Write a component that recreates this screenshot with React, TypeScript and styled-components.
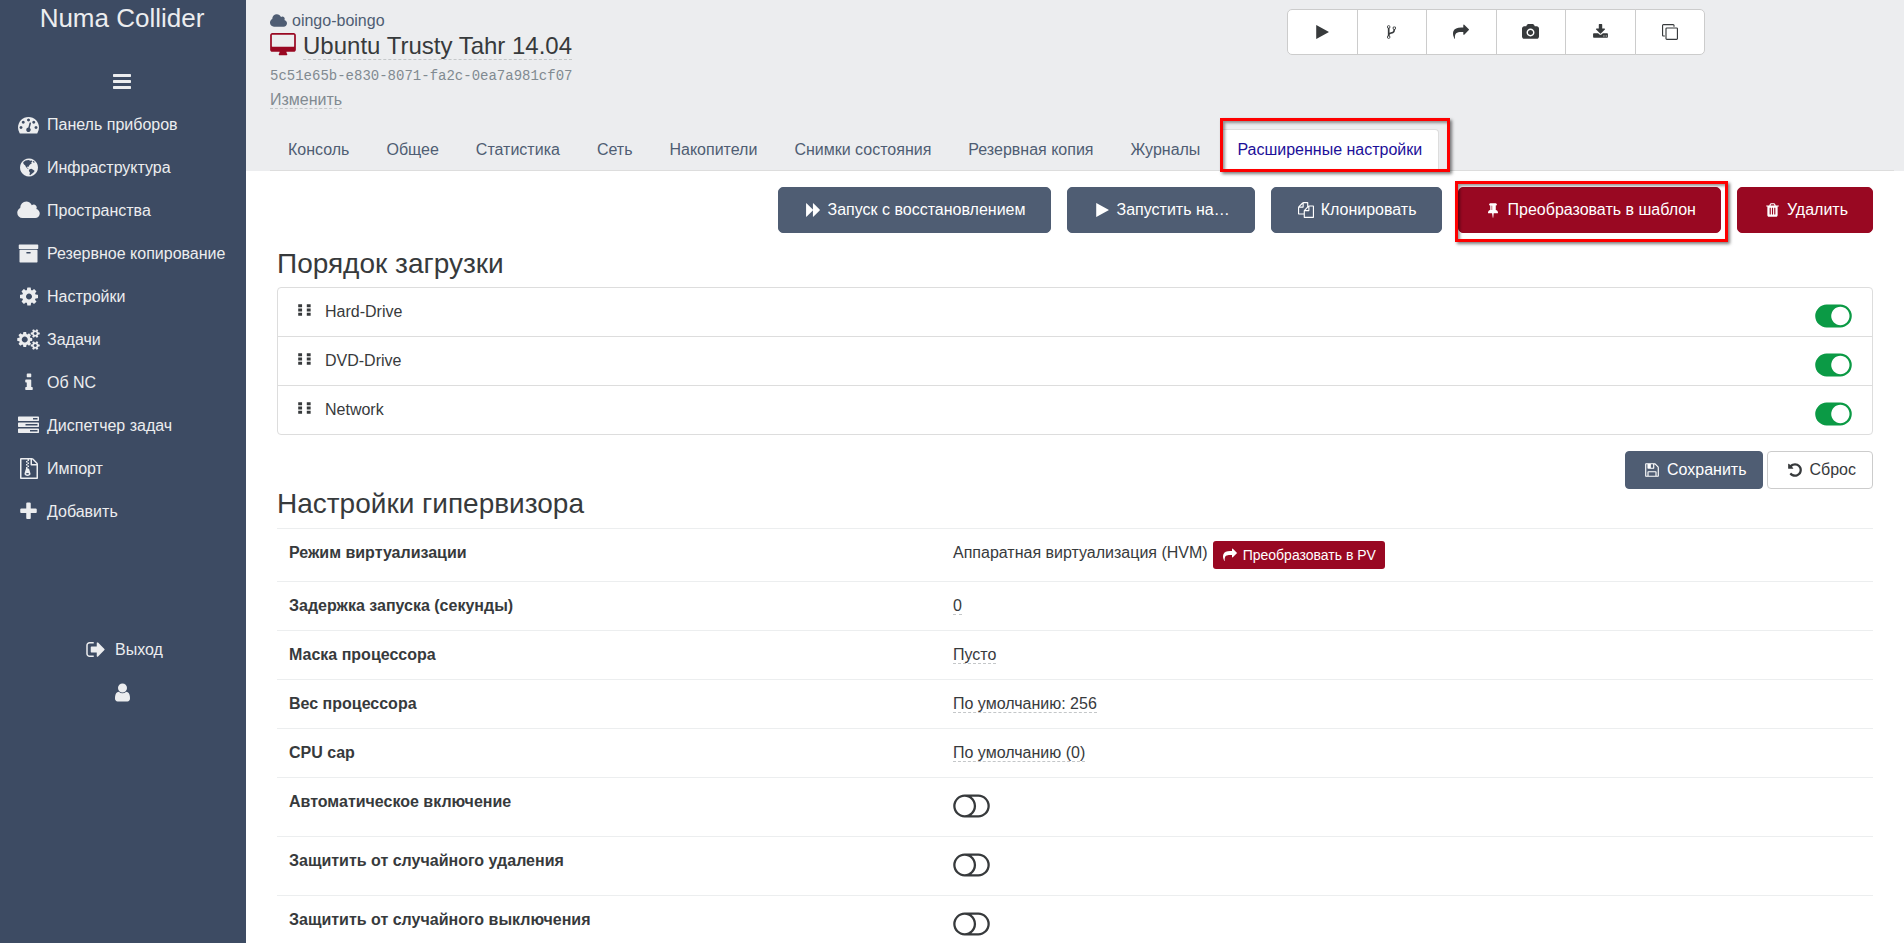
import React from "react";
import styled, { createGlobalStyle, css } from "styled-components";

const Global = createGlobalStyle`
  *, *::before, *::after { box-sizing: border-box; }
  body {
    margin: 0;
    font: 16px/24px "Liberation Sans", Arial, sans-serif;
    color: #373a3c;
    background: #fff;
  }
  a { color: inherit; text-decoration: none; }
  button { font: inherit; cursor: pointer; }
  h1, h2, p, ul { margin: 0; padding: 0; font-weight: normal; }
  ul { list-style: none; }
`;

/* Glyphs share a 1792-unit em square: [left edge, advance, outline]. */
const glyphs = {
  bars: [128, 1536, "M1664 1344v128q0 26-19 45t-45 19h-1408q-26 0-45-19t-19-45v-128q0-26 19-45t45-19h1408q26 0 45 19t19 45zm0-512v128q0 26-19 45t-45 19h-1408q-26 0-45-19t-19-45v-128q0-26 19-45t45-19h1408q26 0 45 19t19 45zm0-512v128q0 26-19 45t-45 19h-1408q-26 0-45-19t-19-45v-128q0-26 19-45t45-19h1408q26 0 45 19t19 45z"],
  dashboard: [0, 1792, "M384 1152q0-53-37.5-90.5t-90.5-37.5-90.5 37.5-37.5 90.5 37.5 90.5 90.5 37.5 90.5-37.5 37.5-90.5zm192-448q0-53-37.5-90.5t-90.5-37.5-90.5 37.5-37.5 90.5 37.5 90.5 90.5 37.5 90.5-37.5 37.5-90.5zm428 481l101-382q6-26-7.5-48.5t-38.5-29.5-48 6.5-30 39.5l-101 382q-60 5-107 43.5t-63 98.5q-20 77 20 146t117 89 146-20 89-117q16-60-6-117t-72-91zm660-33q0-53-37.5-90.5t-90.5-37.5-90.5 37.5-37.5 90.5 37.5 90.5 90.5 37.5 90.5-37.5 37.5-90.5zm-640-640q0-53-37.5-90.5t-90.5-37.5-90.5 37.5-37.5 90.5 37.5 90.5 90.5 37.5 90.5-37.5 37.5-90.5zm448 192q0-53-37.5-90.5t-90.5-37.5-90.5 37.5-37.5 90.5 37.5 90.5 90.5 37.5 90.5-37.5 37.5-90.5zm320 448q0 261-141 483-19 29-54 29h-1402q-35 0-54-29-141-221-141-483 0-182 71-348t191-286 286-191 348-71 348 71 286 191 191 286 71 348z"],
  globe: [128, 1536, "M896 128q209 0 385.500 103t279.500 279.500 103 385.500-103 385.500-279.500 279.500-385.500 103-385.500-103-279.500-279.500-103-385.500 103-385.500 279.500-279.500 385.500-103zM420 420L600 300 860 250 1000 330 1130 290 1200 380 1080 440 1140 540 980 640 880 760 900 840 780 800 720 880 820 980 900 1040 780 1010 640 860 560 700 470 640 400 520zM940 1040L1100 1000 1280 1100 1380 1200 1260 1340 1120 1440 1000 1560 930 1500 980 1340 880 1180zM1240 330L1380 420 1340 500 1240 440z"],
  cloud: [64, 1920, "M1984 1152q0 159-112.5 271.5t-271.5 112.5h-1088q-185 0-316.5-131.5t-131.5-316.5q0-132 71-241.5t187-163.5q-2-28-2-43 0-212 150-362t362-150q158 0 286.5 88t187.5 230q70-62 166-62 106 0 181 75t75 181q0 75-41 138 129 30 213 134.5t84 239.5z"],
  archive: [0, 1792, "M1088 832q0-26-19-45t-45-19h-256q-26 0-45 19t-19 45 19 45 45 19h256q26 0 45-19t19-45zm576-192v960q0 26-19 45t-45 19h-1408q-26 0-45-19t-19-45v-960q0-26 19-45t45-19h1408q26 0 45 19t19 45zm64-448v256q0 26-19 45t-45 19h-1536q-26 0-45-19t-19-45v-256q0-26 19-45t45-19h1536q26 0 45 19t19 45z"],
  cog: [128, 1536, "M1152 896q0-106-75-181t-181-75-181 75-75 181 75 181 181 75 181-75 75-181zm512-109v222q0 12-8 23t-20 13l-185 28q-19 54-39 91 35 50 107 138 10 12 10 25t-9 23q-27 37-99 108t-94 71q-12 0-26-9l-138-108q-44 23-91 38-16 136-29 186-7 28-36 28h-222q-14 0-24.5-8.5t-11.5-21.5l-28-184q-49-16-90-37l-141 107q-10 9-25 9-14 0-25-11-126-114-165-168-7-10-7-23 0-12 8-23 15-21 51-66.5t54-70.5q-27-50-41-99l-183-27q-13-2-21-12.5t-8-23.5v-222q0-12 8-23t19-13l186-28q14-46 39-92-40-57-107-138-10-12-10-24 0-10 9-23 26-36 98.5-107.5t94.5-71.5q13 0 26 10l138 107q44-23 91-38 16-136 29-186 7-28 36-28h222q14 0 24.5 8.5t11.5 21.5l28 184q49 16 90 37l142-107q9-9 24-9 13 0 25 10 129 119 165 170 7 8 7 22 0 12-8 23-15 21-51 66.5t-54 70.5q26 50 41 98l183 28q13 2 21 12.5t8 23.5z"],
  cogs: [0, 1920, "M896 896q0-106-75-181t-181-75-181 75-75 181 75 181 181 75 181-75 75-181zm768 512q0-52-38-90t-90-38-90 38-38 90q0 53 37.5 90.5t90.5 37.5 90.5-37.5 37.5-90.5zm0-1024q0-52-38-90t-90-38-90 38-38 90q0 53 37.5 90.5t90.5 37.5 90.5-37.5 37.5-90.5zm-384 421v185q0 10-7 19.5t-16 10.5l-155 24q-11 35-32 76 34 48 90 115 7 11 7 20 0 12-7 19-23 30-82.5 89.5t-78.5 59.5q-11 0-21-7l-115-90q-37 19-77 31-11 108-23 155-7 24-30 24h-186q-11 0-20-7.5t-10-17.5l-23-153q-34-10-75-31l-118 89q-7 7-20 7-11 0-21-8-144-133-144-160 0-9 7-19 10-14 41-53t47-61q-23-44-35-82l-152-24q-10-1-17-9.5t-7-19.5v-185q0-10 7-19.5t16-10.5l155-24q11-35 32-76-34-48-90-115-7-11-7-20 0-12 7-20 22-30 82-89t79-59q11 0 21 7l115 90q34-18 77-32 11-108 23-154 7-24 30-24h186q11 0 20 7.5t10 17.5l23 153q34 10 75 31l118-89q8-7 20-7 11 0 21 8 144 133 144 160 0 8-7 19-12 16-42 54t-45 60q23 48 34 82l152 23q10 2 17 10.5t7 19.5zm640 533v140q0 16-149 31-12 27-30 52 51 113 51 138 0 4-4 7-122 71-124 71-8 0-46-47t-52-68q-20 2-30 2t-30-2q-14 21-52 68t-46 47q-2 0-124-71-4-3-4-7 0-25 51-138-18-25-30-52-149-15-149-31v-140q0-16 149-31 13-29 30-52-51-113-51-138 0-4 4-7 4-2 35-20t59-34 30-16q8 0 46 46.5t52 67.5q20-2 30-2t30 2q51-71 92-112l6-2q4 0 124 70 4 3 4 7 0 25-51 138 17 23 30 52 149 15 149 31zm0-1024v140q0 16-149 31-12 27-30 52 51 113 51 138 0 4-4 7-122 71-124 71-8 0-46-47t-52-68q-20 2-30 2t-30-2q-14 21-52 68t-46 47q-2 0-124-71-4-3-4-7 0-25 51-138-18-25-30-52-149-15-149-31v-140q0-16 149-31 13-29 30-52-51-113-51-138 0-4 4-7 4-2 35-20t59-34 30-16q8 0 46 46.5t52 67.5q20-2 30-2t30 2q51-71 92-112l6-2q4 0 124 70 4 3 4 7 0 25-51 138 17 23 30 52 149 15 149 31z"],
  info: [576, 640, "M1216 1344v128q0 26-19 45t-45 19h-512q-26 0-45-19t-19-45v-128q0-26 19-45t45-19h64v-384h-64q-26 0-45-19t-19-45v-128q0-26 19-45t45-19h384q26 0 45 19t19 45v576h64q26 0 45 19t19 45zm-128-1152v192q0 26-19 45t-45 19h-256q-26 0-45-19t-19-45v-192q0-26 19-45t45-19h256q26 0 45 19t19 45z"],
  tasks: [0, 1792, "M1024 1408h640v-128h-640v128zm-384-512h1024v-128h-1024v128zm640-512h384v-128h-384v128zm512 832v256q0 26-19 45t-45 19h-1664q-26 0-45-19t-19-45v-256q0-26 19-45t45-19h1664q26 0 45 19t19 45zm0-512v256q0 26-19 45t-45 19h-1664q-26 0-45-19t-19-45v-256q0-26 19-45t45-19h1664q26 0 45 19t19 45zm0-512v256q0 26-19 45t-45 19h-1664q-26 0-45-19t-19-45v-256q0-26 19-45t45-19h1664q26 0 45 19t19 45z"],
  fileArchive: [128, 1536, "M768 384v-128h-128v128h128zm128 128v-128h-128v128h128zm-128 128v-128h-128v128h128zm128 128v-128h-128v128h128zm700-388q28 28 48 76t20 88v1152q0 40-28 68t-68 28h-1344q-40 0-68-28t-28-68v-1600q0-40 28-68t68-28h896q40 0 88 20t76 48zm-444-244v376h376q-10-29-22-41l-313-313q-12-12-41-22zm384 1528v-1024h-416q-40 0-68-28t-28-68v-416h-128v128h-128v-128h-512v1536h1280zm-627-721l107 349q8 27 8 52 0 83-72.5 137.5t-183.5 54.5-183.5-54.5-72.5-137.5q0-25 8-52 21-63 120-396v-128h128v128h79q22 0 39 13t23 34zm-141 465q53 0 90.5-19t37.5-45-37.5-45-90.5-19-90.5 19-37.5 45 37.5 45 90.5 19z"],
  plus: [192, 1408, "M1600 736v192q0 40-28 68t-68 28h-416v416q0 40-28 68t-68 28h-192q-40 0-68-28t-28-68v-416h-416q-40 0-68-28t-28-68v-192q0-40 28-68t68-28h416v-416q0-40 28-68t68-28h192q40 0 68 28t28 68v416h416q40 0 68 28t28 68z"],
  signOut: [64, 1664, "M704 1440q0 4 1 20t.5 26.5-3 23.5-10 19.5-20.5 6.5h-320q-119 0-203.5-84.5t-84.5-203.5v-704q0-119 84.5-203.5t203.5-84.5h320q13 0 22.5 9.5t9.5 22.5q0 4 1 20t.5 26.5-3 23.5-10 19.5-20.5 6.5h-320q-66 0-113 47t-47 113v704q0 66 47 113t113 47h312l11.5 1 11.5 3 8 5.5 7 9 2 13.5zm928-544q0 26-19 45l-544 544q-19 19-45 19t-45-19-19-45v-288h-448q-26 0-45-19t-19-45v-384q0-26 19-45t45-19h448v-288q0-26 19-45t45-19 45 19l544 544q19 19 19 45z"],
  user: [256, 1280, "M1536 1399q0 109-62.5 187t-150.5 78h-854q-88 0-150.5-78t-62.5-187q0-85 8.500-160.500t31.500-152 58.500-131 94-89 134.500-34.500q131 128 313 128t313-128q76 0 134.500 34.500t94 89 58.500 131 31.500 152 8.500 160.500zm-256-887q0 159-112.5 271.5t-271.5 112.5-271.5-112.5-112.5-271.5 112.5-271.5 271.5-112.5 271.5 112.5 112.5 271.5z"],
  desktop: [0, 1920, "M1792 992v-832q0-13-9.5-22.5t-22.5-9.5h-1600q-13 0-22.5 9.5t-9.5 22.5v832q0 13 9.5 22.5t22.5 9.5h1600q13 0 22.5-9.5t9.5-22.5zm128-832v1088q0 66-47 113t-113 47h-544q0 37 16 77.5t32 71 16 43.5q0 26-19 45t-45 19h-512q-26 0-45-19t-19-45q0-14 16-44t32-70 16-78h-544q-66 0-113-47t-47-113v-1088q0-66 47-113t113-47h1600q66 0 113 47t47 113z"],
  play: [192, 1408, "M1576 927l-1328 738q-23 13-39.5 3t-16.5-36v-1472q0-26 16.5-36t39.5 3l1328 738q23 13 23 31t-23 31z"],
  fork: [384, 1024, "M672 1472q0-40-28-68t-68-28-68 28-28 68 28 68 68 28 68-28 28-68zm0-1152q0-40-28-68t-68-28-68 28-28 68 28 68 68 28 68-28 28-68zm640 128q0-40-28-68t-68-28-68 28-28 68 28 68 68 28 68-28 28-68zm96 0q0 52-26 96.5t-70 69.5q-2 287-226 414-67 38-203 81-128 40-169.5 71t-41.5 100v26q44 25 70 69.5t26 96.5q0 80-56 136t-136 56-136-56-56-136q0-52 26-96.5t70-69.5v-820q-44-25-70-69.5t-26-96.5q0-80 56-136t136-56 136 56 56 136q0 52-26 96.5t-70 69.5v497q54-26 154-57 55-17 87.5-29.5t70.5-31 59-39.5 40.5-51 28-69.5 8.5-91.5q-44-25-70-69.5t-26-96.5q0-80 56-136t136-56 136 56 56 136z"],
  share: [0, 1792, "M1792 640q0 26-19 45l-512 512q-19 19-45 19t-45-19-19-45v-256h-224q-98 0-175.5 6t-154 21.5-133 42.5-105.5 69.5-80 101-48.5 138.5-17.5 181q0 55 5 123 0 6 2.5 23.5t2.5 26.5q0 15-8.5 25t-23.5 10q-16 0-28-17-7-9-13-22t-13.5-30-10.5-24q-127-285-127-451 0-199 53-333 162-403 875-403h224v-256q0-26 19-45t45-19 45 19l512 512q19 19 19 45z"],
  camera: [0, 1920, "M960 672q119 0 203.5 84.5t84.5 203.5-84.5 203.5-203.5 84.5-203.5-84.5-84.5-203.5 84.5-203.5 203.5-84.5zm704-416q106 0 181 75t75 181v896q0 106-75 181t-181 75h-1408q-106 0-181-75t-75-181v-896q0-106 75-181t181-75h224l51-136q19-49 69.5-84.5t103.5-35.5h512q53 0 103.5 35.5t69.5 84.5l51 136h224zm-704 1152q185 0 316.5-131.5t131.5-316.5-131.5-316.5-316.5-131.5-316.5 131.5-131.5 316.5 131.5 316.5 316.5 131.5z"],
  download: [64, 1664, "M1344 1344q0-26-19-45t-45-19-45 19-19 45 19 45 45 19 45-19 19-45zm256 0q0-26-19-45t-45-19-45 19-19 45 19 45 45 19 45-19 19-45zm128-224v320q0 40-28 68t-68 28h-1472q-40 0-68-28t-28-68v-320q0-40 28-68t68-28h465l135 136q58 56 136 56t136-56l136-136h464q40 0 68 28t28 68zm-325-569q17 41-14 70l-448 448q-18 19-45 19t-45-19l-448-448q-31-29-14-70 17-39 59-39h256v-448q0-26 19-45t45-19h256q26 0 45 19t19 45v448h256q42 0 59 39z"],
  clone: [0, 1792, "M1664 1632v-1088q0-13-9.5-22.5t-22.5-9.5h-1088q-13 0-22.5 9.5t-9.5 22.5v1088q0 13 9.5 22.5t22.5 9.5h1088q13 0 22.5-9.5t9.5-22.5zm128-1088v1088q0 66-47 113t-113 47h-1088q-66 0-113-47t-47-113v-1088q0-66 47-113t113-47h1088q66 0 113 47t47 113zm-384-384v160h-128v-160q0-13-9.5-22.5t-22.5-9.5h-1088q-13 0-22.5 9.5t-9.5 22.5v1088q0 13 9.5 22.5t22.5 9.5h160v128h-160q-66 0-113-47t-47-113v-1088q0-66 47-113t113-47h1088q66 0 113 47t47 113z"],
  forward: [0, 1664, "M45 1651q-19 19-32 13t-13-32v-1472q0-26 13-32t32 13l710 710q8 8 13 19v-710q0-26 13-32t32 13l710 710q19 19 19 45t-19 45l-710 710q-19 19-32 13t-13-32v-710q-5 11-13 19z"],
  files: [0, 1792, "M1696 384q40 0 68 28t28 68v1216q0 40-28 68t-68 28h-960q-40 0-68-28t-28-68v-288h-544q-40 0-68-28t-28-68v-672q0-40 20-88t48-76l408-408q28-28 76-48t88-20h416q40 0 68 28t28 68v328q68-40 128-40h416zm-544 213l-299 299h299v-299zm-640-384l-299 299h299v-299zm196 647l316-316v-416h-384v416q0 40-28 68t-68 28h-416v640h512v-256q0-40 20-88t48-76zm956 804v-1152h-384v416q0 40-28 68t-68 28h-416v640h896z"],
  pin: [320, 1152, "M800 864v-448q0-14-9-23t-23-9-23 9-9 23v448q0 14 9 23t23 9 23-9 9-23zm672 352q0 26-19 45t-45 19h-429l-51 483q-2 12-10.5 20.5t-20.5 8.5h-1q-27 0-32-27l-76-485h-404q-26 0-45-19t-19-45q0-123 78.5-221.5t177.5-98.5v-512q-52 0-90-38t-38-90 38-90 90-38h640q52 0 90 38t38 90-38 90-90 38v512q99 0 177.5 98.5t78.5 221.5z"],
  trash: [192, 1408, "M704 1376v-704q0-14-9-23t-23-9h-64q-14 0-23 9t-9 23v704q0 14 9 23t23 9h64q14 0 23-9t9-23zm256 0v-704q0-14-9-23t-23-9h-64q-14 0-23 9t-9 23v704q0 14 9 23t23 9h64q14 0 23-9t9-23zm256 0v-704q0-14-9-23t-23-9h-64q-14 0-23 9t-9 23v704q0 14 9 23t23 9h64q14 0 23-9t9-23zm-544-992h448l-48-117q-7-9-17-11h-317q-10 2-17 11zm928 32v64q0 14-9 23t-23 9h-96v948q0 83-47 143.5t-113 60.5h-832q-66 0-113-58.5t-47-141.5v-952h-96q-14 0-23-9t-9-23v-64q0-14 9-23t23-9h309l70-167q15-37 54-63t79-26h320q40 0 79 26t54 63l70 167h309q14 0 23 9t9 23z"],
  save: [128, 1536, "M512 1536h768v-384h-768v384zm896 0h128v-896q0-14-10-38.5t-20-34.5l-281-281q-10-10-34-20t-39-10v416q0 40-28 68t-68 28h-576q-40 0-68-28t-28-68v-416h-128v1280h128v-416q0-40 28-68t68-28h832q40 0 68 28t28 68v416zm-384-928v-320q0-13-9.5-22.5t-22.5-9.5h-192q-13 0-22.5 9.5t-9.5 22.5v320q0 13 9.5 22.5t22.5 9.5h192q13 0 22.5-9.5t9.5-22.5zm640 32v928q0 40-28 68t-68 28h-1344q-40 0-68-28t-28-68v-1344q0-40 28-68t68-28h928q40 0 88 20t76 48l280 280q28 28 48 76t20 88z"],
  undo: [128, 1536, "M1664 896q0 156-61 298t-164 245-245 164-298 61q-172 0-327-72.5t-264-204.5q-7-10-6.5-22.5t8.5-20.5l137-138q10-9 25-9 16 2 23 12 73 95 179 147t225 52q104 0 198.5-40.5t163.5-109.5 109.5-163.5 40.5-198.5-40.5-198.5-109.5-163.5-163.5-109.5-198.5-40.5q-98 0-188 35.5t-160 101.5l137 138q31 30 14 69-17 40-59 40h-448q-26 0-45-19t-19-45v-448q0-42 40-59 39-17 69 14l130 129q107-101 244.5-156.5t284.5-55.5q156 0 298 61t245 164 164 245 61 298z"],
  grip: [0, 1408, "M0 128h432v352h-432zM0 608h432v352h-432zM0 1088h432v352h-432zM960 128h432v352h-432zM960 608h432v352h-432zM960 1088h432v352h-432z"],
  toggleOn: [0, 2048, "M0 896q0-130 51-248.5t136.5-204 204-136.5 248.5-51h768q130 0 248.5 51t204 136.5 136.5 204 51 248.5-51 248.5-136.5 204-204 136.5-248.5 51h-768q-130 0-248.5-51t-204-136.5-136.5-204-51-248.5zm1408 512q104 0 198.5-40.5t163.5-109.5 109.5-163.5 40.5-198.5-40.5-198.5-109.5-163.5-163.5-109.5-198.5-40.5-198.5 40.5-163.5 109.5-109.5 163.5-40.5 198.5 40.5 198.5 109.5 163.5 163.5 109.5 198.5 40.5z"],
  toggleOff: [0, 2048, "M1152 896q0-104-40.5-198.5t-109.5-163.5-163.5-109.5-198.5-40.5-198.5 40.5-163.5 109.5-109.5 163.5-40.5 198.5 40.5 198.5 109.5 163.5 163.5 109.5 198.5 40.5 198.5-40.5 163.5-109.5 109.5-163.5 40.5-198.5zm768 0q0-104-40.5-198.5t-109.5-163.5-163.5-109.5-198.5-40.5h-386q119 90 188.5 224t69.5 288-69.5 288-188.5 224h386q104 0 198.5-40.5t163.5-109.5 109.5-163.5 40.5-198.5zm128 0q0 130-51 248.5t-136.5 204-204 136.5-248.5 51h-768q-130 0-248.5-51t-204-136.5-136.5-204-51-248.5 51-248.5 136.5-204 204-136.5 248.5-51h768q130 0 248.5 51t204 136.5 136.5 204 51 248.5z"],
} as const;

type GlyphName = keyof typeof glyphs;

const Glyph = styled.svg`
  display: inline-block;
  flex: none;
  fill: currentColor;
  fill-rule: evenodd;
  overflow: visible;
`;

function Icon({ name, size = 16 }: { name: GlyphName; size?: number }) {
  const [left, advance, outline] = glyphs[name];
  return (
    <Glyph
      aria-hidden="true"
      viewBox={`${left} 0 ${advance} 1792`}
      width={Math.round((advance / 1792) * size)}
      height={size}
    >
      <path d={outline} />
    </Glyph>
  );
}

/* Centres an icon of any width in a column, so labels line up after it. */
const IconSlot = styled.span<{ $width: number }>`
  display: flex;
  flex: none;
  justify-content: center;
  width: ${(p) => p.$width}px;
`;

const Page = styled.div`
  display: flex;
  height: 100vh;
`;

const Sidebar = styled.nav`
  flex: none;
  width: 246px;
  padding-right: 2px;
  overflow-y: auto;
  scrollbar-width: none;
  color: #ecedef;
  background: #3d4b63;
`;

const Brand = styled.a`
  display: block;
  padding: 2px 0;
  font-size: 26px;
  line-height: 32px;
  text-align: center;
`;

const Collapse = styled.button`
  display: flex;
  justify-content: center;
  width: 100%;
  margin-top: 32px;
  padding: 3px 0;
  border: 0;
  color: inherit;
  background: none;
`;

const Menu = styled.ul`
  padding: 8px 14px 0 15px;
`;

const MenuLink = styled.a`
  display: flex;
  align-items: center;
  gap: 5px;
  height: 43px;
  white-space: nowrap;
`;

const Account = styled.ul`
  padding-top: 95px;
`;

const AccountLink = styled.a<{ $labelled?: boolean }>`
  display: flex;
  align-items: center;
  justify-content: center;
  gap: 9px;
  height: 43px;
  padding-left: ${(p) => (p.$labelled ? 5 : 0)}px;
`;

const Main = styled.main`
  flex: 1;
  min-width: 0;
  overflow-y: auto;
  scrollbar-width: none;
`;

const Header = styled.header`
  padding: 9px 10px 0 24px;
  background: #ecedef;
`;

const HeaderTop = styled.div`
  display: grid;
  grid-template-columns: minmax(0, 1fr) 607px;
  align-items: start;
`;

const PoolLink = styled.a`
  display: flex;
  align-items: center;
  gap: 5px;
  color: #4f5d73;
`;

const VmTitle = styled.h1`
  display: flex;
  align-items: flex-start;
  gap: 7px;
  font-size: 24px;
  line-height: 26px;
  color: #990822;
`;

const Editable = styled.a<{ $muted?: boolean }>`
  color: ${(p) => (p.$muted ? "#818a91" : "#373a3c")};
  border-bottom: 1px dashed #c4c7c9;
`;

const Uuid = styled.p`
  padding-top: 4px;
  font: 14px/24px "Liberation Mono", monospace;
  color: #818a91;
`;

const Actions = styled.div`
  display: flex;
  width: 418px;
`;

const ActionButton = styled.button`
  display: flex;
  flex: 1;
  align-items: center;
  justify-content: center;
  height: 46px;
  margin-left: -1px;
  padding: 0;
  border: 1px solid #ccc;
  color: #373a3c;
  background: #fff;
  &:first-child {
    margin-left: 0;
    border-radius: 5px 0 0 5px;
  }
  &:last-child { border-radius: 0 5px 5px 0; }
`;

const Tabs = styled.ul`
  display: flex;
  gap: 3px;
  height: 42px;
  margin-top: 17px;
  padding-left: 1px;
  border-bottom: 1px solid #ddd;
`;

const Tab = styled.a<{ $active?: boolean }>`
  display: block;
  height: 42px;
  padding: 8px 16px;
  border: 1px solid transparent;
  border-radius: 4px 4px 0 0;
  color: #4f5d73;
  white-space: nowrap;
  ${(p) =>
    p.$active &&
    css`
      border-color: #ddd #ddd transparent;
      color: #1c0f99;
      background: #fff;
    `}
`;

const Highlighted = styled.li`
  position: relative;
`;

const Marker = styled.span<{ $inset: string }>`
  position: absolute;
  inset: ${(p) => p.$inset};
  border: 3px solid #fe0000;
  box-shadow: 2px 2px 3px rgba(0, 0, 0, 0.5), inset 2px 2px 3px rgba(0, 0, 0, 0.4);
  pointer-events: none;
`;

const Content = styled.div`
  padding: 16px 31px 0;
`;

const Toolbar = styled.ul`
  display: flex;
  justify-content: flex-end;
  gap: 16px;
`;

const tones = {
  primary: css`
    color: #fff;
    background: #4f5d73;
    border-color: #4f5d73;
  `,
  danger: css`
    color: #fff;
    background: #990822;
    border-color: #990822;
  `,
  plain: css`
    color: #373a3c;
    background: #fff;
    border-color: #ccc;
  `,
};

const Button = styled.button<{ $tone: keyof typeof tones; $large?: boolean }>`
  display: flex;
  align-items: center;
  justify-content: center;
  gap: 4px;
  height: ${(p) => (p.$large ? 46 : 38)}px;
  padding: 0 ${(p) => (p.$large ? 24 : 16)}px;
  border: 1px solid;
  border-radius: ${(p) => (p.$large ? 5 : 4)}px;
  white-space: nowrap;
  ${(p) => tones[p.$tone]}
`;

const SmallButton = styled.button`
  display: flex;
  align-items: center;
  gap: 4px;
  height: 28px;
  padding: 0 9px 0 8px;
  border: 0;
  border-radius: 3px;
  font-size: 14px;
  color: #fff;
  background: #990822;
`;

const SectionTitle = styled.h2`
  padding-bottom: 8px;
  font-size: 28px;
  line-height: 30px;
`;

const BootSection = styled.section`
  padding-top: 16px;
`;

const BootList = styled.ul`
  border: 1px solid #ddd;
  border-radius: 4px;
`;

const BootItem = styled.li`
  display: flex;
  align-items: flex-start;
  gap: 14px;
  height: 48px;
  padding: 12px 20px;
  & + & {
    height: 49px;
    border-top: 1px solid #ddd;
  }
`;

const Grip = styled.span`
  display: flex;
  padding-top: 3px;
`;

const BootName = styled.span`
  flex: 1;
`;

const Switch = styled.label<{ $on?: boolean }>`
  position: relative;
  display: flex;
  width: 37px;
  height: 34px;
  color: ${(p) => (p.$on ? "#0b9a45" : "#373a3c")};
  input {
    position: absolute;
    inset: 0;
    width: 100%;
    height: 100%;
    margin: 0;
    opacity: 0;
    cursor: pointer;
  }
`;

const FormActions = styled.div`
  display: flex;
  justify-content: flex-end;
  gap: 4px;
  padding-top: 16px;
`;

const Settings = styled.table`
  width: 100%;
  margin-top: 1px;
  table-layout: fixed;
  border-collapse: collapse;
  th, td {
    padding: 12px;
    border-top: 1px solid #eceeef;
    text-align: left;
    vertical-align: top;
  }
  th { width: 664px; }
`;

const Inline = styled.div`
  display: flex;
  align-items: flex-start;
  gap: 5px;
`;

const menu: [GlyphName, string][] = [
  ["dashboard", "Панель приборов"],
  ["globe", "Инфраструктура"],
  ["cloud", "Пространства"],
  ["archive", "Резервное копирование"],
  ["cog", "Настройки"],
  ["cogs", "Задачи"],
  ["info", "Об NC"],
  ["tasks", "Диспетчер задач"],
  ["fileArchive", "Импорт"],
  ["plus", "Добавить"],
];

const actions: [GlyphName, string][] = [
  ["play", "Запустить"],
  ["fork", "Миграция"],
  ["share", "Переместить"],
  ["camera", "Снимок"],
  ["download", "Экспорт"],
  ["clone", "Копировать"],
];

const tabs = [
  "Консоль",
  "Общее",
  "Статистика",
  "Сеть",
  "Накопители",
  "Снимки состояния",
  "Резервная копия",
  "Журналы",
];

const editableRows: [string, string][] = [
  ["Задержка запуска (секунды)", "0"],
  ["Маска процессора", "Пусто"],
  ["Вес процессора", "По умолчанию: 256"],
  ["CPU cap", "По умолчанию (0)"],
];

const switchRows = [
  "Автоматическое включение",
  "Защитить от случайного удаления",
  "Защитить от случайного выключения",
];

function Toggle({ label, initial }: { label: string; initial: boolean }) {
  const [on, setOn] = React.useState(initial);
  return (
    <Switch $on={on}>
      <Icon name={on ? "toggleOn" : "toggleOff"} size={32} />
      <input
        type="checkbox"
        role="switch"
        aria-label={label}
        checked={on}
        onChange={(e) => setOn(e.target.checked)}
      />
    </Switch>
  );
}

type IconButtonProps = {
  icon: GlyphName;
  tone: keyof typeof tones;
  large?: boolean;
  children: React.ReactNode;
};

function IconButton({ icon, tone, large, children }: IconButtonProps) {
  return (
    <Button type="button" $tone={tone} $large={large}>
      <IconSlot $width={21}>
        <Icon name={icon} />
      </IconSlot>
      {children}
    </Button>
  );
}

export default function App() {
  return (
    <Page>
      <Global />
      <Sidebar>
        <Brand href="#">Numa Collider</Brand>
        <Collapse type="button" aria-label="Меню">
          <Icon name="bars" size={21} />
        </Collapse>
        <Menu>
          {menu.map(([icon, label]) => (
            <li key={label}>
              <MenuLink href="#">
                <IconSlot $width={27}>
                  <Icon name={icon} size={21} />
                </IconSlot>
                {label}
              </MenuLink>
            </li>
          ))}
        </Menu>
        <Account>
          <li>
            <AccountLink href="#" $labelled>
              <Icon name="signOut" size={21} />
              Выход
            </AccountLink>
          </li>
          <li>
            <AccountLink href="#" aria-label="Профиль">
              <Icon name="user" size={21} />
            </AccountLink>
          </li>
        </Account>
      </Sidebar>
      <Main>
        <Header>
          <HeaderTop>
            <div>
              <PoolLink href="#">
                <Icon name="cloud" />
                oingo-boingo
              </PoolLink>
              <VmTitle>
                <Icon name="desktop" size={24} />
                <Editable href="#">Ubuntu Trusty Tahr 14.04</Editable>
              </VmTitle>
              <Uuid>5c51e65b-e830-8071-fa2c-0ea7a981cf07</Uuid>
              <p>
                <Editable href="#" $muted>
                  Изменить
                </Editable>
              </p>
            </div>
            <Actions>
              {actions.map(([icon, label]) => (
                <ActionButton key={icon} type="button" aria-label={label}>
                  <Icon name={icon} />
                </ActionButton>
              ))}
            </Actions>
          </HeaderTop>
          <Tabs>
            {tabs.map((label) => (
              <li key={label}>
                <Tab href="#">{label}</Tab>
              </li>
            ))}
            <Highlighted>
              <Tab href="#" $active>
                Расширенные настройки
              </Tab>
              <Marker $inset="-11px -11px -2px 0" />
            </Highlighted>
          </Tabs>
        </Header>
        <Content>
          <Toolbar>
            <li>
              <IconButton icon="forward" tone="primary" large>
                Запуск с восстановлением
              </IconButton>
            </li>
            <li>
              <IconButton icon="play" tone="primary" large>
                Запустить на…
              </IconButton>
            </li>
            <li>
              <IconButton icon="files" tone="primary" large>
                Клонировать
              </IconButton>
            </li>
            <Highlighted>
              <IconButton icon="pin" tone="danger" large>
                Преобразовать в шаблон
              </IconButton>
              <Marker $inset="-6px -7px -9px -3px" />
            </Highlighted>
            <li>
              <IconButton icon="trash" tone="danger" large>
                Удалить
              </IconButton>
            </li>
          </Toolbar>
          <BootSection>
            <SectionTitle>Порядок загрузки</SectionTitle>
            <BootList>
              {["Hard-Drive", "DVD-Drive", "Network"].map((device) => (
                <BootItem key={device}>
                  <Grip>
                    <Icon name="grip" />
                  </Grip>
                  <BootName>{device}</BootName>
                  <Toggle label={device} initial />
                </BootItem>
              ))}
            </BootList>
            <FormActions>
              <IconButton icon="save" tone="primary">
                Сохранить
              </IconButton>
              <IconButton icon="undo" tone="plain">
                Сброс
              </IconButton>
            </FormActions>
          </BootSection>
          <section>
            <SectionTitle>Настройки гипервизора</SectionTitle>
            <Settings>
              <tbody>
                <tr>
                  <th scope="row">Режим виртуализации</th>
                  <td>
                    <Inline>
                      Аппаратная виртуализация (HVM)
                      <SmallButton type="button">
                        <IconSlot $width={18}>
                          <Icon name="share" size={14} />
                        </IconSlot>
                        Преобразовать в PV
                      </SmallButton>
                    </Inline>
                  </td>
                </tr>
                {editableRows.map(([label, value]) => (
                  <tr key={label}>
                    <th scope="row">{label}</th>
                    <td>
                      <Editable href="#">{value}</Editable>
                    </td>
                  </tr>
                ))}
                {switchRows.map((label) => (
                  <tr key={label}>
                    <th scope="row">{label}</th>
                    <td>
                      <Toggle label={label} initial={false} />
                    </td>
                  </tr>
                ))}
              </tbody>
            </Settings>
          </section>
        </Content>
      </Main>
    </Page>
  );
}
